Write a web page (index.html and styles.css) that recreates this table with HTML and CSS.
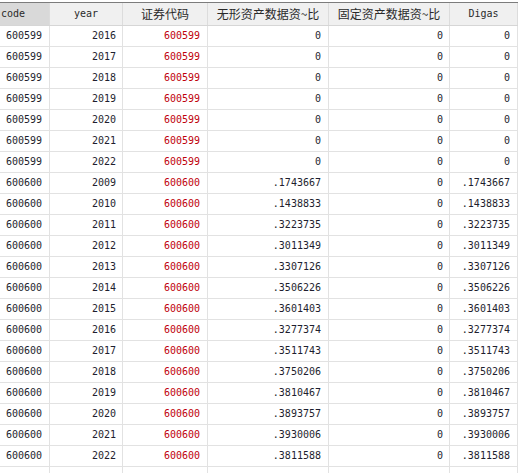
FILE: index.html
```html
<!DOCTYPE html>
<html>
<head>
<meta charset="utf-8">
<link rel="stylesheet" href="styles.css">
</head>
<body>
<div class="sheet">
  <div class="row head">
    <div class="c c1 sel">code</div>
    <div class="c c2 ctr">year</div>
    <div class="c c3 ctr cjk">证券代码</div>
    <div class="c c4 ctr cjk">无形资产数据资~比</div>
    <div class="c c5 ctr cjk">固定资产数据资~比</div>
    <div class="c c6 ctr">Digas</div>
  </div>
  <div class="row"><div class="c c1">600599</div><div class="c c2 r">2016</div><div class="c c3 r red">600599</div><div class="c c4 r">0</div><div class="c c5 r">0</div><div class="c c6 r">0</div></div>
  <div class="row"><div class="c c1">600599</div><div class="c c2 r">2017</div><div class="c c3 r red">600599</div><div class="c c4 r">0</div><div class="c c5 r">0</div><div class="c c6 r">0</div></div>
  <div class="row"><div class="c c1">600599</div><div class="c c2 r">2018</div><div class="c c3 r red">600599</div><div class="c c4 r">0</div><div class="c c5 r">0</div><div class="c c6 r">0</div></div>
  <div class="row"><div class="c c1">600599</div><div class="c c2 r">2019</div><div class="c c3 r red">600599</div><div class="c c4 r">0</div><div class="c c5 r">0</div><div class="c c6 r">0</div></div>
  <div class="row"><div class="c c1">600599</div><div class="c c2 r">2020</div><div class="c c3 r red">600599</div><div class="c c4 r">0</div><div class="c c5 r">0</div><div class="c c6 r">0</div></div>
  <div class="row"><div class="c c1">600599</div><div class="c c2 r">2021</div><div class="c c3 r red">600599</div><div class="c c4 r">0</div><div class="c c5 r">0</div><div class="c c6 r">0</div></div>
  <div class="row"><div class="c c1">600599</div><div class="c c2 r">2022</div><div class="c c3 r red">600599</div><div class="c c4 r">0</div><div class="c c5 r">0</div><div class="c c6 r">0</div></div>
  <div class="row"><div class="c c1">600600</div><div class="c c2 r">2009</div><div class="c c3 r red">600600</div><div class="c c4 r">.1743667</div><div class="c c5 r">0</div><div class="c c6 r">.1743667</div></div>
  <div class="row"><div class="c c1">600600</div><div class="c c2 r">2010</div><div class="c c3 r red">600600</div><div class="c c4 r">.1438833</div><div class="c c5 r">0</div><div class="c c6 r">.1438833</div></div>
  <div class="row"><div class="c c1">600600</div><div class="c c2 r">2011</div><div class="c c3 r red">600600</div><div class="c c4 r">.3223735</div><div class="c c5 r">0</div><div class="c c6 r">.3223735</div></div>
  <div class="row"><div class="c c1">600600</div><div class="c c2 r">2012</div><div class="c c3 r red">600600</div><div class="c c4 r">.3011349</div><div class="c c5 r">0</div><div class="c c6 r">.3011349</div></div>
  <div class="row"><div class="c c1">600600</div><div class="c c2 r">2013</div><div class="c c3 r red">600600</div><div class="c c4 r">.3307126</div><div class="c c5 r">0</div><div class="c c6 r">.3307126</div></div>
  <div class="row"><div class="c c1">600600</div><div class="c c2 r">2014</div><div class="c c3 r red">600600</div><div class="c c4 r">.3506226</div><div class="c c5 r">0</div><div class="c c6 r">.3506226</div></div>
  <div class="row"><div class="c c1">600600</div><div class="c c2 r">2015</div><div class="c c3 r red">600600</div><div class="c c4 r">.3601403</div><div class="c c5 r">0</div><div class="c c6 r">.3601403</div></div>
  <div class="row"><div class="c c1">600600</div><div class="c c2 r">2016</div><div class="c c3 r red">600600</div><div class="c c4 r">.3277374</div><div class="c c5 r">0</div><div class="c c6 r">.3277374</div></div>
  <div class="row"><div class="c c1">600600</div><div class="c c2 r">2017</div><div class="c c3 r red">600600</div><div class="c c4 r">.3511743</div><div class="c c5 r">0</div><div class="c c6 r">.3511743</div></div>
  <div class="row"><div class="c c1">600600</div><div class="c c2 r">2018</div><div class="c c3 r red">600600</div><div class="c c4 r">.3750206</div><div class="c c5 r">0</div><div class="c c6 r">.3750206</div></div>
  <div class="row"><div class="c c1">600600</div><div class="c c2 r">2019</div><div class="c c3 r red">600600</div><div class="c c4 r">.3810467</div><div class="c c5 r">0</div><div class="c c6 r">.3810467</div></div>
  <div class="row"><div class="c c1">600600</div><div class="c c2 r">2020</div><div class="c c3 r red">600600</div><div class="c c4 r">.3893757</div><div class="c c5 r">0</div><div class="c c6 r">.3893757</div></div>
  <div class="row"><div class="c c1">600600</div><div class="c c2 r">2021</div><div class="c c3 r red">600600</div><div class="c c4 r">.3930006</div><div class="c c5 r">0</div><div class="c c6 r">.3930006</div></div>
  <div class="row"><div class="c c1">600600</div><div class="c c2 r">2022</div><div class="c c3 r red">600600</div><div class="c c4 r">.3811588</div><div class="c c5 r">0</div><div class="c c6 r">.3811588</div></div>
  <div class="row"><div class="c c1"></div><div class="c c2"></div><div class="c c3"></div><div class="c c4"></div><div class="c c5"></div><div class="c c6"></div></div>
</div>
</body>
</html>
```
FILE: styles.css
```css
html, body {
  margin: 0;
  padding: 0;
  background: #ffffff;
  overflow: hidden;
}
.sheet {
  margin-top: 2px;
  border-top: 1px solid #7c7c7c;
  width: 518px;
  font-family: "DejaVu Sans Mono", monospace;
  font-size: 10px;
  color: #1e1e2e;
}
.row {
  display: grid;
  grid-template-columns: 50px 73px 85px 121px 121px 68px;
  height: 21px;
  box-sizing: border-box;
  border-bottom: 1px solid #e2e2e2;
}
.row.head {
  height: 23px;
  background: #f0f0f0;
  border-bottom: 1px solid #d6d6d6;
  color: #2a2a2a;
}
.c {
  box-sizing: border-box;
  border-right: 1px solid #e2e2e2;
  line-height: 20px;
  white-space: nowrap;
  overflow: hidden;
}
.head .c {
  line-height: 22px;
  border-right-color: #dcdcdc;
}
.c1 {
  padding-left: 6px;
}
.head .c1 {
  padding-left: 1px;
}
.sel {
  background: #d9d9d9;
}
.ctr {
  text-align: center;
}
.cjk {
  font-family: "Noto Sans CJK SC", "Noto Sans", sans-serif;
  font-size: 12px;
}
.r {
  text-align: right;
  padding-right: 7px;
}
.c2.r, .c5.r {
  padding-right: 6px;
}
.red {
  color: #c0000c;
}
```
